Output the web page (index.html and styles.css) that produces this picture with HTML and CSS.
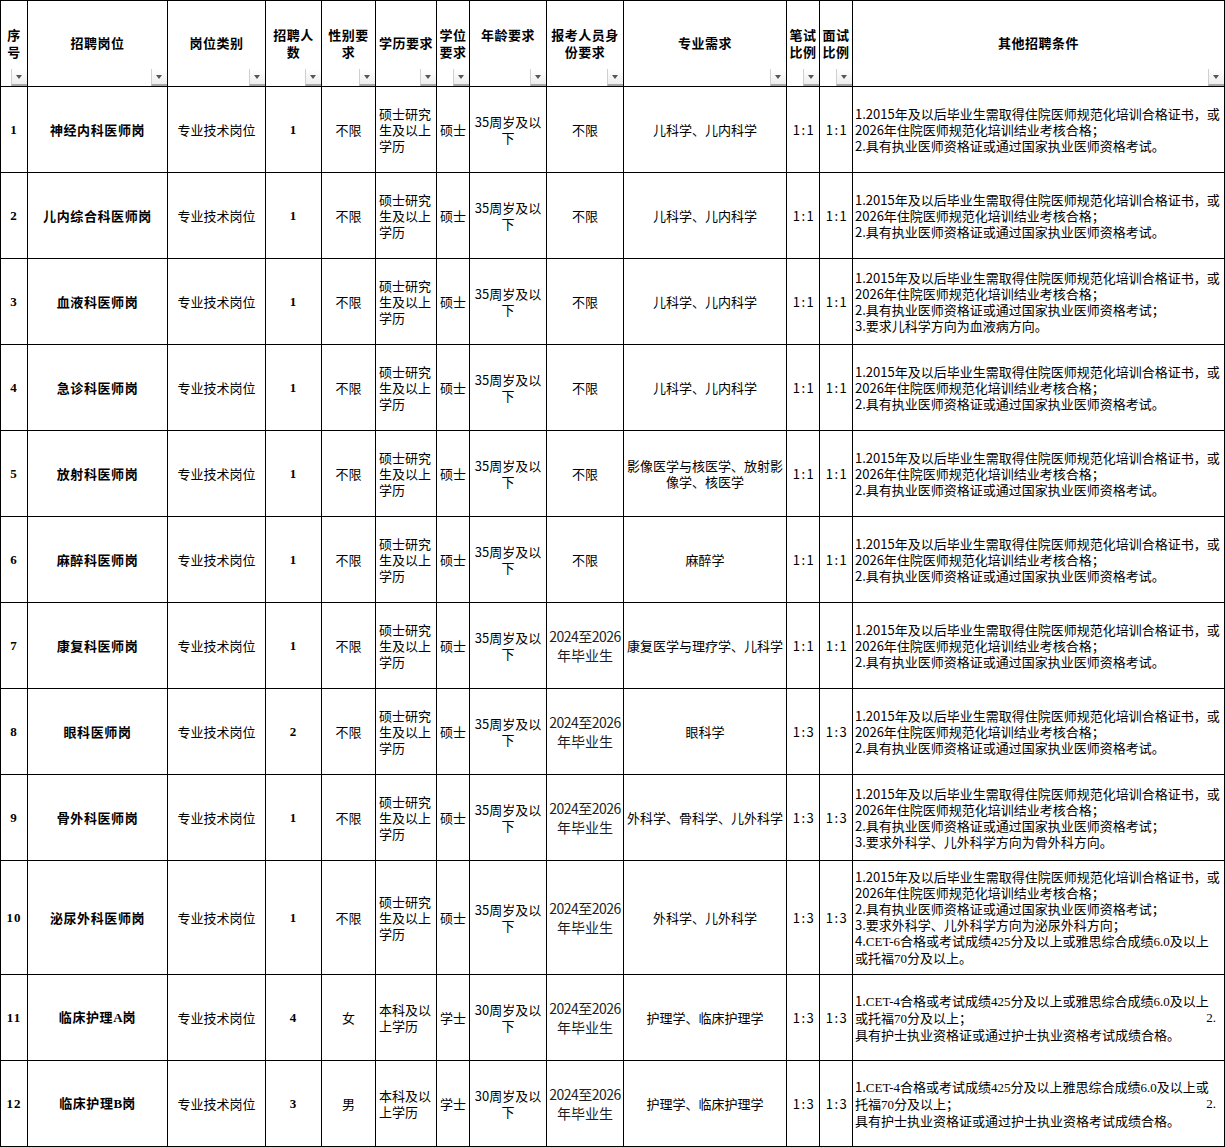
FILE: index.html
```html
<!DOCTYPE html>
<html lang="zh-CN">
<head>
<meta charset="utf-8">
<title>招聘岗位表</title>
<link rel="stylesheet" href="styles.css">
</head>
<body>
<table class="sheet">
<colgroup>
<col class="c1"><col class="c2"><col class="c3"><col class="c4"><col class="c5"><col class="c6"><col class="c7"><col class="c8"><col class="c9"><col class="c10"><col class="c11"><col class="c12"><col class="c13">
</colgroup>
<thead>
<tr class="hrow">
<th>序<br>号<span class="dd"></span></th>
<th>招聘岗位<span class="dd"></span></th>
<th>岗位类别<span class="dd"></span></th>
<th>招聘人<br>数<span class="dd"></span></th>
<th>性别要<br>求<span class="dd"></span></th>
<th>学历要求<span class="dd"></span></th>
<th>学位<br>要求<span class="dd"></span></th>
<th>年龄要求<br>&nbsp;<span class="dd"></span></th>
<th>报考人员身<br>份要求<span class="dd"></span></th>
<th>专业需求<span class="dd"></span></th>
<th>笔试<br>比例<span class="dd"></span></th>
<th>面试<br>比例<span class="dd"></span></th>
<th>其他招聘条件<span class="dd"></span></th>
</tr>
</thead>
<tbody>
<tr class="row">
<td class="seq">1</td><td class="pos">神经内科医师岗</td><td>专业技术岗位</td><td class="cnt">1</td><td>不限</td>
<td class="edu">硕士研究<br>生及以上<br>学历</td><td>硕士</td><td>35周岁及以<br>下</td><td>不限</td><td>儿科学、儿内科学</td><td class="ratio">1:1</td><td class="ratio">1:1</td>
<td class="cond">1.2015年及以后毕业生需取得住院医师规范化培训合格证书，或<br>2026年住院医师规范化培训结业考核合格；<br>2.具有执业医师资格证或通过国家执业医师资格考试。</td>
</tr>
<tr class="row">
<td class="seq">2</td><td class="pos">儿内综合科医师岗</td><td>专业技术岗位</td><td class="cnt">1</td><td>不限</td>
<td class="edu">硕士研究<br>生及以上<br>学历</td><td>硕士</td><td>35周岁及以<br>下</td><td>不限</td><td>儿科学、儿内科学</td><td class="ratio">1:1</td><td class="ratio">1:1</td>
<td class="cond">1.2015年及以后毕业生需取得住院医师规范化培训合格证书，或<br>2026年住院医师规范化培训结业考核合格；<br>2.具有执业医师资格证或通过国家执业医师资格考试。</td>
</tr>
<tr class="row">
<td class="seq">3</td><td class="pos">血液科医师岗</td><td>专业技术岗位</td><td class="cnt">1</td><td>不限</td>
<td class="edu">硕士研究<br>生及以上<br>学历</td><td>硕士</td><td>35周岁及以<br>下</td><td>不限</td><td>儿科学、儿内科学</td><td class="ratio">1:1</td><td class="ratio">1:1</td>
<td class="cond">1.2015年及以后毕业生需取得住院医师规范化培训合格证书，或<br>2026年住院医师规范化培训结业考核合格；<br>2.具有执业医师资格证或通过国家执业医师资格考试；<br>3.要求儿科学方向为血液病方向。</td>
</tr>
<tr class="row">
<td class="seq">4</td><td class="pos">急诊科医师岗</td><td>专业技术岗位</td><td class="cnt">1</td><td>不限</td>
<td class="edu">硕士研究<br>生及以上<br>学历</td><td>硕士</td><td>35周岁及以<br>下</td><td>不限</td><td>儿科学、儿内科学</td><td class="ratio">1:1</td><td class="ratio">1:1</td>
<td class="cond">1.2015年及以后毕业生需取得住院医师规范化培训合格证书，或<br>2026年住院医师规范化培训结业考核合格；<br>2.具有执业医师资格证或通过国家执业医师资格考试。</td>
</tr>
<tr class="row">
<td class="seq">5</td><td class="pos">放射科医师岗</td><td>专业技术岗位</td><td class="cnt">1</td><td>不限</td>
<td class="edu">硕士研究<br>生及以上<br>学历</td><td>硕士</td><td>35周岁及以<br>下</td><td>不限</td><td>影像医学与核医学、放射影<br>像学、核医学</td><td class="ratio">1:1</td><td class="ratio">1:1</td>
<td class="cond">1.2015年及以后毕业生需取得住院医师规范化培训合格证书，或<br>2026年住院医师规范化培训结业考核合格；<br>2.具有执业医师资格证或通过国家执业医师资格考试。</td>
</tr>
<tr class="row">
<td class="seq">6</td><td class="pos">麻醉科医师岗</td><td>专业技术岗位</td><td class="cnt">1</td><td>不限</td>
<td class="edu">硕士研究<br>生及以上<br>学历</td><td>硕士</td><td>35周岁及以<br>下</td><td>不限</td><td>麻醉学</td><td class="ratio">1:1</td><td class="ratio">1:1</td>
<td class="cond">1.2015年及以后毕业生需取得住院医师规范化培训合格证书，或<br>2026年住院医师规范化培训结业考核合格；<br>2.具有执业医师资格证或通过国家执业医师资格考试。</td>
</tr>
<tr class="row">
<td class="seq">7</td><td class="pos">康复科医师岗</td><td>专业技术岗位</td><td class="cnt">1</td><td>不限</td>
<td class="edu">硕士研究<br>生及以上<br>学历</td><td>硕士</td><td>35周岁及以<br>下</td><td class="grad"><span class="gd">2024至2026</span><br>年毕业生</td><td>康复医学与理疗学、儿科学</td><td class="ratio">1:1</td><td class="ratio">1:1</td>
<td class="cond">1.2015年及以后毕业生需取得住院医师规范化培训合格证书，或<br>2026年住院医师规范化培训结业考核合格；<br>2.具有执业医师资格证或通过国家执业医师资格考试。</td>
</tr>
<tr class="row">
<td class="seq">8</td><td class="pos">眼科医师岗</td><td>专业技术岗位</td><td class="cnt">2</td><td>不限</td>
<td class="edu">硕士研究<br>生及以上<br>学历</td><td>硕士</td><td>35周岁及以<br>下</td><td class="grad"><span class="gd">2024至2026</span><br>年毕业生</td><td>眼科学</td><td class="ratio">1:3</td><td class="ratio">1:3</td>
<td class="cond">1.2015年及以后毕业生需取得住院医师规范化培训合格证书，或<br>2026年住院医师规范化培训结业考核合格；<br>2.具有执业医师资格证或通过国家执业医师资格考试。</td>
</tr>
<tr class="row">
<td class="seq">9</td><td class="pos">骨外科医师岗</td><td>专业技术岗位</td><td class="cnt">1</td><td>不限</td>
<td class="edu">硕士研究<br>生及以上<br>学历</td><td>硕士</td><td>35周岁及以<br>下</td><td class="grad"><span class="gd">2024至2026</span><br>年毕业生</td><td>外科学、骨科学、儿外科学</td><td class="ratio">1:3</td><td class="ratio">1:3</td>
<td class="cond">1.2015年及以后毕业生需取得住院医师规范化培训合格证书，或<br>2026年住院医师规范化培训结业考核合格；<br>2.具有执业医师资格证或通过国家执业医师资格考试；<br>3.要求外科学、儿外科学方向为骨外科方向。</td>
</tr>
<tr class="row tall">
<td class="seq">10</td><td class="pos">泌尿外科医师岗</td><td>专业技术岗位</td><td class="cnt">1</td><td>不限</td>
<td class="edu">硕士研究<br>生及以上<br>学历</td><td>硕士</td><td>35周岁及以<br>下</td><td class="grad"><span class="gd">2024至2026</span><br>年毕业生</td><td>外科学、儿外科学</td><td class="ratio">1:3</td><td class="ratio">1:3</td>
<td class="cond">1.2015年及以后毕业生需取得住院医师规范化培训合格证书，或<br>2026年住院医师规范化培训结业考核合格；<br>2.具有执业医师资格证或通过国家执业医师资格考试；<br>3.要求外科学、儿外科学方向为泌尿外科方向；<br>4.<span class="s">CET-6</span>合格或考试成绩<span class="s">425</span>分及以上或雅思综合成绩<span class="s">6.0</span>及以上<br>或托福<span class="s">70</span>分及以上。</td>
</tr>
<tr class="row">
<td class="seq">11</td><td class="pos">临床护理<span class="lat">A</span>岗</td><td>专业技术岗位</td><td class="cnt">4</td><td>女</td>
<td class="edu">本科及以<br>上学历</td><td>学士</td><td>30周岁及以<br>下</td><td class="grad"><span class="gd">2024至2026</span><br>年毕业生</td><td>护理学、临床护理学</td><td class="ratio">1:3</td><td class="ratio">1:3</td>
<td class="cond">1.<span class="s">CET-4</span>合格或考试成绩<span class="s">425</span>分及以上或雅思综合成绩<span class="s">6.0</span>及以上<div class="split"><span>或托福<span class="s">70</span>分及以上；</span><span class="s">2.</span></div>具有护士执业资格证或通过护士执业资格考试成绩合格。</td>
</tr>
<tr class="row">
<td class="seq">12</td><td class="pos">临床护理<span class="lat">B</span>岗</td><td>专业技术岗位</td><td class="cnt">3</td><td>男</td>
<td class="edu">本科及以<br>上学历</td><td>学士</td><td>30周岁及以<br>下</td><td class="grad"><span class="gd">2024至2026</span><br>年毕业生</td><td>护理学、临床护理学</td><td class="ratio">1:3</td><td class="ratio">1:3</td>
<td class="cond">1.<span class="s">CET-4</span>合格或考试成绩<span class="s">425</span>分及以上雅思综合成绩<span class="s">6.0</span>及以上或<div class="split"><span>托福<span class="s">70</span>分及以上；</span><span class="s">2.</span></div>具有护士执业资格证或通过护士执业资格考试成绩合格。</td>
</tr>
</tbody>
</table>
</body>
</html>
```

FILE: styles.css
```css
html, body {
  margin: 0;
  padding: 0;
  background: #fff;
}
body {
  font-family: "Noto Sans CJK SC", "Noto Sans", sans-serif;
  font-size: 13px;
  color: #000;
}
.sheet {
  border-collapse: collapse;
  table-layout: fixed;
  width: 1224px;
}
.c1 { width: 27px; }
.c2 { width: 140px; }
.c3 { width: 98px; }
.c4 { width: 56px; }
.c5 { width: 54px; }
.c6 { width: 61px; }
.c7 { width: 33px; }
.c8 { width: 77px; }
.c9 { width: 77px; }
.c10 { width: 163px; }
.c11 { width: 33px; }
.c12 { width: 33px; }
.c13 { width: 372px; }
.sheet th,
.sheet td {
  border: 1px solid #000;
  padding: 0 2px;
  vertical-align: middle;
  text-align: center;
  line-height: 16px;
  white-space: nowrap;
  overflow: hidden;
}
.hrow { height: 86px; }
.row { height: 86px; }
.row.tall { height: 114px; }
.sheet th {
  position: relative;
  font-weight: 700;
  letter-spacing: 0.5px;
  line-height: 17px;
  padding-bottom: 2px;
}
.dd {
  position: absolute;
  right: 0;
  bottom: 0;
  width: 16px;
  height: 17px;
  box-sizing: border-box;
  border-left: 1px solid #d0d0d0;
  border-bottom: 2px solid #a8a8a8;
  background: linear-gradient(#ffffff, #eeeeee);
}
.dd::after {
  content: "";
  position: absolute;
  left: 4px;
  top: 6px;
  border-left: 3.5px solid transparent;
  border-right: 3.5px solid transparent;
  border-top: 4px solid #555;
}
.seq,
.cnt {
  font-family: "Liberation Serif", serif;
  font-weight: 700;
  letter-spacing: 1px;
}
.pos {
  font-weight: 700;
  letter-spacing: 0.6px;
}
.lat {
  font-family: "Liberation Serif", serif;
  font-weight: 700;
  letter-spacing: 0;
}
.sheet td.edu {
  text-align: left;
  padding-left: 3px;
}
.sheet td.ratio {
  letter-spacing: 1.5px;
  padding-left: 3px;
  padding-right: 1px;
}
.sheet td.grad {
  font-size: 14px;
  line-height: 19px;
  color: #1e1e1e;
}
.gd {
  letter-spacing: -0.5px;
}
.sheet td.cond {
  text-align: left;
  padding-left: 2px;
}
.s {
  font-family: "Liberation Serif", serif;
}
.split {
  display: flex;
  justify-content: space-between;
  padding-right: 6px;
}
```
